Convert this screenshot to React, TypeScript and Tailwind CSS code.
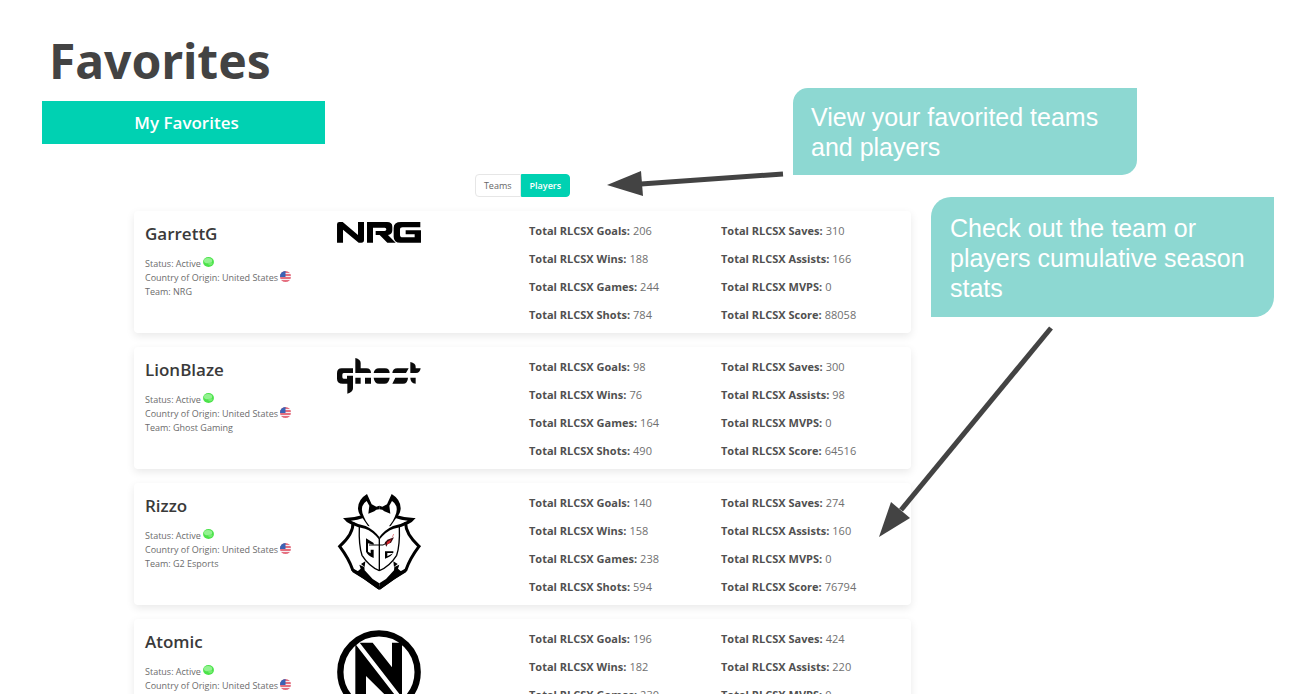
import React, { useState } from "react";

type Player = {
  name: string;
  team: string;
  logo: React.ReactNode;
  goals: number;
  wins: number;
  games: number;
  shots: number;
  saves: number;
  assists: number;
  mvps: number;
  score: number;
};

function NrgLogo() {
  return (
    <svg viewBox="0 0 252 62" className="w-full" role="img" aria-label="NRG">
      <g fill="#000">
        <path d="M0 62V7q0-7 7-7h10l46 39V0h18v54q0 8-8 8h-8L18 23v39z" />
        <path d="M90 0h60q16 0 16 14v10q0 13-13 15l23 23h-25l-23-23h-12V27h27q5 0 5-5t-5-5h-35v45H90z" />
        <path d="M192 0h58v16h-53q-8 0-8 7v15q0 8 8 8h36v-9h-27V25h46v37h-62q-20 0-20-18V18q0-18 22-18z" />
      </g>
    </svg>
  );
}

function GhostLogo() {
  return (
    <svg viewBox="0 0 252 108" className="w-full" role="img" aria-label="Ghost">
      <g fill="#0a0a0a">
        <path d="M14 31h34v14H20q-4 0-4 5v7q0 5 4 5h10V53h18v38q0 12-17 16V77H17Q0 77 0 62V46q0-15 14-15z" />
        <path d="M55 0q16 4 16 15v16h17q14 0 14 14H55z" />
        <path d="M55 59h16v18H55zM84 59h18v18H84z" />
        <path d="M110 45q2-14 16-14h18q14 0 14 14zM110 59h48q-2 18-16 18h-16q-14 0-16-18z" />
        <path d="M166 45q1-14 15-14h34l-8 14zM166 77l9-18h38q-1 18-15 18z" />
        <path d="M220 12q16 3 16 14v5h15q-2 14-14 14h-17zM220 59h16v18q-16-2-16-18z" />
      </g>
    </svg>
  );
}

function G2Half() {
  return (
    <g>
      <path
        d="M98 116Q100 150 58 188Q85 224 97 258Q138 284 177 314"
        fill="none"
        stroke="#000"
        strokeWidth="9"
      />
      <path d="M68 103Q96 104 124 95L129 103Q112 110 92 111Q110 121 136 127Q160 138 177 160V168Q156 142 134 135Q84 126 68 103z" fill="#000" />
      <path d="M140 31Q112 48 113 76Q115 92 126 102L143 127L148 128Q135 112 131 100Q122 84 126 68Q129 58 139 52L147 66L144 90L162 83L168 78L177 77V66L168 69L154 62Z" fill="#000" />
      <path d="M117 130Q115 185 125 215Q146 248 177 261" fill="none" stroke="#000" strokeWidth="4" />
      <path d="M93 258L113 262L121 255L117 243L132 250L133 260L157 286L177 299V319L130 286L97 266z" fill="#000" />
      <path d="M122 241L135 233L133 250z" fill="#000" />
    </g>
  );
}

function G2Logo() {
  return (
    <svg viewBox="50 31 252 291" className="w-full" role="img" aria-label="G2 Esports">
      <G2Half />
      <g transform="translate(354 0) scale(-1 1)">
        <G2Half />
      </g>
      <path d="M177 164V262" stroke="#000" strokeWidth="4" />
      <path d="M137 164L160 178V183L143 179V204L151 209V198H160V223Q142 215 137 204z" fill="#000" />
      <path d="M146 184H188Q197 182 197 174" fill="none" stroke="#000" strokeWidth="3" />
      <path d="M194 203H219V208H201V218L218 209Q213 219 194 225z" fill="#000" />
      <path d="M193 178L201 168L221 161L212 177L202 181L198 189z" fill="#3a0c10" />
      <path d="M200 175L213 167L208 178L199 183z" fill="#d8232a" />
      <path d="M216 161L220 151" stroke="#e58b90" strokeWidth="3" />
    </svg>
  );
}

function EnvyLogo() {
  return (
    <svg viewBox="0 0 252 252" className="w-full" role="img" aria-label="Envy">
      <circle cx="126" cy="126" r="116" fill="#fff" stroke="#000" strokeWidth="19" />
      <path d="M55 42L190 216V240L87 138V225L55 200z" fill="#000" />
      <path d="M68 38H107L165 112V38H195V202z" fill="#000" />
    </svg>
  );
}

function StatusDot() {
  return (
    <svg viewBox="0 0 24 22" className="mb-1 h-[10px] w-[11px]" aria-hidden="true">
      <ellipse cx="12" cy="11" rx="12" ry="11" fill="#4be34a" />
      <ellipse cx="11" cy="8" rx="9" ry="6" fill="#93f291" />
      <ellipse cx="16" cy="15" rx="5" ry="3" fill="#74ec70" />
    </svg>
  );
}

function UsFlag() {
  return (
    <svg viewBox="0 0 22 22" className="mb-1 h-[11px] w-[11px]" role="img" aria-label="United States flag">
      <clipPath id="flag-round">
        <circle cx="11" cy="11" r="11" />
      </clipPath>
      <g clipPath="url(#flag-round)">
        <rect width="22" height="22" fill="#f6eef2" />
        <path d="M0 2h22M0 8h22M0 14h22M0 20h22" stroke="#e0455a" strokeWidth="3" />
        <rect width="11" height="12" fill="#3b62b5" />
      </g>
    </svg>
  );
}

const players: Player[] = [
  { name: "GarrettG", team: "NRG", logo: <NrgLogo />, goals: 206, wins: 188, games: 244, shots: 784, saves: 310, assists: 166, mvps: 0, score: 88058 },
  { name: "LionBlaze", team: "Ghost Gaming", logo: <GhostLogo />, goals: 98, wins: 76, games: 164, shots: 490, saves: 300, assists: 98, mvps: 0, score: 64516 },
  { name: "Rizzo", team: "G2 Esports", logo: <G2Logo />, goals: 140, wins: 158, games: 238, shots: 594, saves: 274, assists: 160, mvps: 0, score: 76794 },
  { name: "Atomic", team: "Envy", logo: <EnvyLogo />, goals: 196, wins: 182, games: 230, shots: 612, saves: 424, assists: 220, mvps: 0, score: 90412 },
];

function Stats({ items }: { items: [string, number][] }) {
  return (
    <dl className="text-[11px] leading-7 text-[#707070]">
      {items.map(([label, value]) => (
        <div key={label} className="flex gap-[3px] whitespace-nowrap">
          <dt className="font-bold text-[#505050]">Total RLCSX {label}:</dt>
          <dd>{value}</dd>
        </div>
      ))}
    </dl>
  );
}

function PlayerCard({ player }: { player: Player }) {
  return (
    <li className="grid h-[122px] shrink-0 grid-cols-4 gap-x-[13px] rounded bg-white px-[11px] pt-[6px] shadow-[0_3px_8px_rgba(10,10,10,0.09)]">
      <div className="pt-[5px] text-[9px] leading-[14px] text-[#6c6c6c]">
        <h2 className="mb-[11px] text-[17px] leading-6 font-semibold text-[#3a3a3a]">{player.name}</h2>
        <p className="flex h-[14px] items-center gap-[2px] whitespace-nowrap">
          Status: Active
          <StatusDot />
        </p>
        <p className="flex h-[14px] items-center gap-[2px] whitespace-nowrap">
          Country of Origin: United States
          <UsFlag />
        </p>
        <p>Team: {player.team}</p>
      </div>
      <div className="w-[84px] pt-[5px]">{player.logo}</div>
      <Stats items={[["Goals", player.goals], ["Wins", player.wins], ["Games", player.games], ["Shots", player.shots]]} />
      <Stats items={[["Saves", player.saves], ["Assists", player.assists], ["MVPS", player.mvps], ["Score", player.score]]} />
    </li>
  );
}

function Annotations() {
  return (
    <aside className="font-['Liberation_Sans',Arial,sans-serif] text-[25px] leading-[30px] text-white">
      <p className="absolute top-[88px] right-[162px] w-[344px] rounded-tl-[15px] rounded-br-[15px] bg-[#8dd8d2] px-[18px] pt-[14px] pb-[13px]">
        View your favorited teams and players
      </p>
      <p className="absolute top-[197px] right-[25px] w-[343px] rounded-tl-[20px] rounded-br-[20px] bg-[#8dd8d2] pt-4 pr-4 pb-[14px] pl-[19px]">
        Check out the team or players cumulative season stats
      </p>
      <svg viewBox="0 0 180 30" className="absolute top-[168px] right-[514px] h-[30px] w-[180px]" aria-hidden="true">
        <path d="M178 6L36 16" stroke="#434343" strokeWidth="5" />
        <path d="M2 17L36 3L38 28z" fill="#434343" />
      </svg>
      <svg viewBox="0 0 180 220" className="absolute top-[322px] right-[244px] h-[220px] w-[180px]" aria-hidden="true">
        <path d="M176 6L26 188" stroke="#434343" strokeWidth="5" />
        <path d="M4 215L16 180L35 196z" fill="#434343" />
      </svg>
    </aside>
  );
}

export default function App() {
  const [tab, setTab] = useState<"Teams" | "Players">("Players");
  return (
    <div className="relative h-screen overflow-hidden bg-white font-['Open_Sans','Noto_Sans',sans-serif]">
      <header className="pt-[31px] pl-[42px]">
        <h1 className="pl-[7px] font-['Noto_Sans',sans-serif] text-5xl leading-[60px] font-bold text-[#434343]">Favorites</h1>
        <div className="mt-[10px] w-[283px] bg-[#00d1b2] pl-[6px] text-center text-[17px] leading-[43px] font-semibold text-white">
          My Favorites
        </div>
      </header>
      <main className="pr-[388px] pl-[134px]">
        <div className="flex justify-center pt-[30px] pb-[14px] text-[9px]">
          {(["Teams", "Players"] as const).map((name) => (
            <button
              key={name}
              type="button"
              aria-pressed={tab === name}
              onClick={() => setTab(name)}
              className={
                tab === name
                  ? "h-[23px] border border-[#00d1b2] bg-[#00d1b2] px-2 font-semibold text-white first:rounded-l-sm last:rounded-r-sm"
                  : "h-[23px] border border-[#e6e6e6] bg-white px-2 text-[#666] first:rounded-l-sm last:rounded-r-sm"
              }
            >
              {name}
            </button>
          ))}
        </div>
        <ul className="flex flex-col gap-[14px]">
          {players.map((player) => (
            <PlayerCard key={player.name} player={player} />
          ))}
        </ul>
      </main>
      <Annotations />
    </div>
  );
}
